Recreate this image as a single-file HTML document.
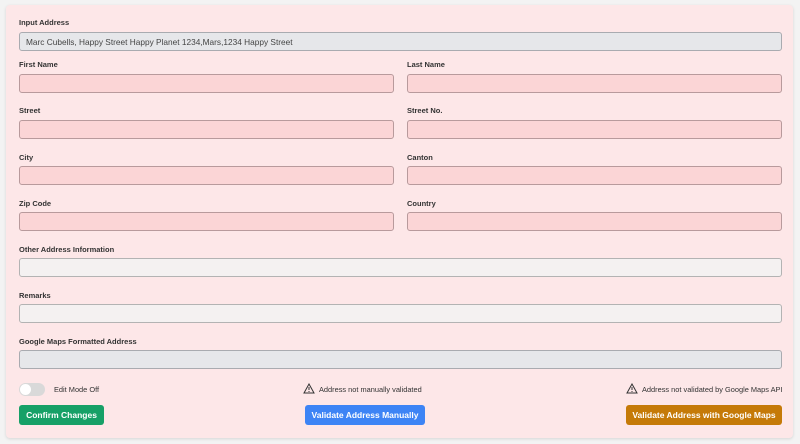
<!DOCTYPE html>
<html><head><style>
body{margin:0;width:800px;height:444px;background:#f3f3f3;font-family:"Liberation Sans",sans-serif;position:relative;overflow:hidden}
.card{position:absolute;left:6px;top:5px;width:787px;height:433px;background:#fde7e8;border-radius:4px;box-shadow:0 1px 3px rgba(0,0,0,.12)}
.l{position:absolute;font-size:7.5px;font-weight:bold;color:#333}
.i{position:absolute;height:17px;border:1px solid #b89a9c;border-radius:3px;background:#fbd5d6;box-sizing:content-box}
.g{background:#e6e7ea;border-color:#a9abb0}
.w{background:#f4f1f1;border-color:#b3b3b3}
.t{position:absolute;font-size:7.4px;color:#333}
.b{position:absolute;height:20px;border-radius:3px;color:#fff;font-weight:bold;font-size:8.5px;text-align:center;line-height:20px}
</style></head><body>
<div class="card"></div>
<div class="l" style="left:19px;top:18px">Input Address</div>
<div class="i g" style="left:19px;top:32px;width:761px"><span style="font-size:8.3px;color:#444;position:absolute;left:6px;top:4px">Marc Cubells, Happy Street Happy Planet 1234,Mars,1234 Happy Street</span></div>
<div class="l" style="left:19px;top:60px">First Name</div><div class="l" style="left:407px;top:60px">Last Name</div>
<div class="i" style="left:19px;top:74px;width:373px"></div><div class="i" style="left:407px;top:74px;width:373px"></div>
<div class="l" style="left:19px;top:106px">Street</div><div class="l" style="left:407px;top:106px">Street No.</div>
<div class="i" style="left:19px;top:120px;width:373px"></div><div class="i" style="left:407px;top:120px;width:373px"></div>
<div class="l" style="left:19px;top:153px">City</div><div class="l" style="left:407px;top:153px">Canton</div>
<div class="i" style="left:19px;top:166px;width:373px"></div><div class="i" style="left:407px;top:166px;width:373px"></div>
<div class="l" style="left:19px;top:199px">Zip Code</div><div class="l" style="left:407px;top:199px">Country</div>
<div class="i" style="left:19px;top:212px;width:373px"></div><div class="i" style="left:407px;top:212px;width:373px"></div>
<div class="l" style="left:19px;top:245px">Other Address Information</div>
<div class="i w" style="left:19px;top:258px;width:761px"></div>
<div class="l" style="left:19px;top:291px">Remarks</div>
<div class="i w" style="left:19px;top:304px;width:761px"></div>
<div class="l" style="left:19px;top:337px">Google Maps Formatted Address</div>
<div class="i g" style="left:19px;top:350px;width:761px"></div>
<div style="position:absolute;left:19px;top:383px;width:26px;height:13px;border-radius:7px;background:#d9d9d9"><div style="position:absolute;left:1px;top:1px;width:11px;height:11px;border-radius:50%;background:#fff"></div></div>
<div class="t" style="left:54px;top:385px">Edit Mode Off</div>
<svg style="position:absolute;left:303px;top:383px" width="12" height="11" viewBox="0 0 12 11"><path d="M6 1L11 10H1Z" fill="none" stroke="#333" stroke-width="1"/><path d="M6 4v3M6 8v1" stroke="#333"/></svg>
<div class="t" style="left:319px;top:385px">Address not manually validated</div>
<svg style="position:absolute;left:626px;top:383px" width="12" height="11" viewBox="0 0 12 11"><path d="M6 1L11 10H1Z" fill="none" stroke="#333" stroke-width="1"/><path d="M6 4v3M6 8v1" stroke="#333"/></svg>
<div class="t" style="left:642px;top:385px">Address not validated by Google Maps API</div>
<div class="b" style="left:19px;top:405px;width:85px;background:#16a067">Confirm Changes</div>
<div class="b" style="left:305px;top:405px;width:120px;background:#3d84f5">Validate Address Manually</div>
<div class="b" style="left:626px;top:405px;width:156px;background:#c57a08">Validate Address with Google Maps</div>
</body></html>
